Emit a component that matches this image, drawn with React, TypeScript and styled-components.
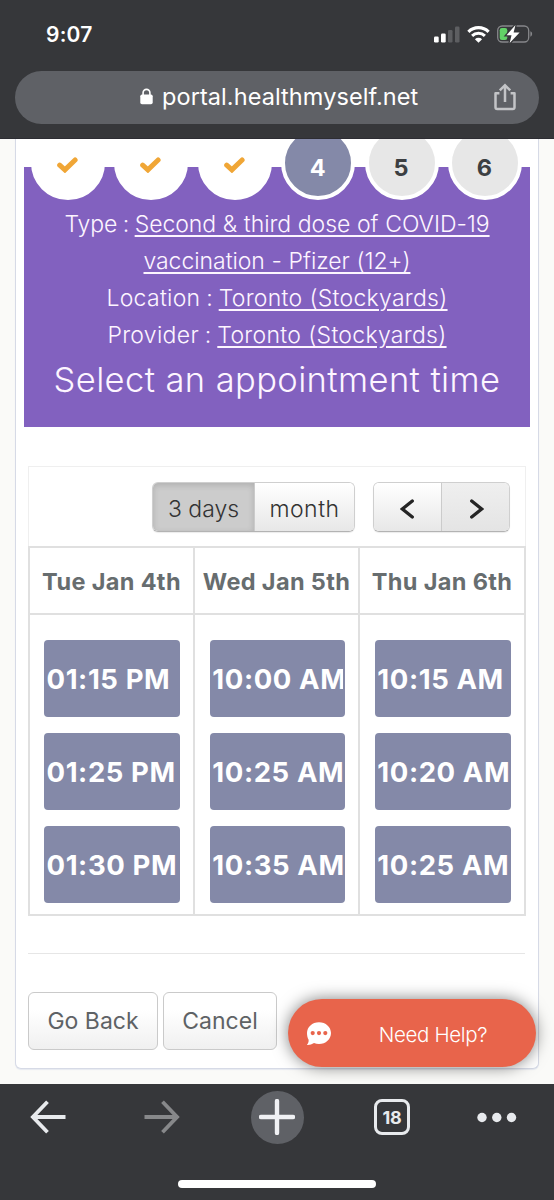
import React from "react";
import styled, { createGlobalStyle } from "styled-components";

const Global = createGlobalStyle`
  * { box-sizing: border-box; }
  body { margin: 0; background: #36373a; }
  button { margin: 0; padding: 0; border: 0; font: inherit; color: inherit; background: none; }
`;

const sans = `Inter, "Liberation Sans", sans-serif`;

const Phone = styled.div`
  width: 554px;
  height: 1200px;
  display: flex;
  flex-direction: column;
  font-family: ${sans};
  background: #36373a;
  overflow: hidden;
`;

const TopChrome = styled.header`
  flex: 0 0 139px;
  padding: 0 15px;
  border-bottom: 1px solid #2d2d33;
`;

const StatusBar = styled.div`
  height: 71px;
  padding: 0 6px 3px 31px;
  display: flex;
  align-items: center;
  justify-content: space-between;
`;

const Clock = styled.span`
  color: #fff;
  font-size: 21px;
  font-weight: 600;
  letter-spacing: 0.2px;
`;

const StatusIcons = styled.div`
  display: flex;
  align-items: center;
  gap: 7px;
`;

const AddressBar = styled.div`
  height: 53px;
  border-radius: 27px;
  background: #5f6166;
  color: #fff;
  display: grid;
  grid-template-columns: 125px 1fr 68px;
  align-items: center;
  padding-bottom: 2px;
`;

const Address = styled.div`
  grid-column: 2;
  display: flex;
  align-items: center;
  gap: 9px;
  font-size: 23.5px;
  letter-spacing: 0.08px;
  white-space: nowrap;
`;

const ShareButton = styled.button`
  justify-self: center;
  height: 28px;
`;

const Page = styled.main`
  flex: 1;
  min-height: 0;
  padding: 0 15px 15px;
  background: #fafaf8;
  overflow: hidden;
`;

const Card = styled.section`
  height: 943px;
  padding: 0 8px;
  border: 1px solid #d6dae6;
  border-top: 0;
  border-radius: 0 0 6px 6px;
  background: #fff;
  box-shadow: 0 1px 1px #e6e9f0;
`;

const Steps = styled.ol`
  list-style: none;
  margin: -13px 0 0;
  padding: 0 8px 0 7px;
  display: flex;
  justify-content: space-between;
  position: relative;
  z-index: 1;
`;

const tones = {
  done: { bg: "#fff", fg: "#f0a636", drop: 3 },
  current: { bg: "#8489a8", fg: "#fff", drop: 8 },
  next: { bg: "#e7e7e7", fg: "#3c3f42", drop: 8 },
};

const Step = styled.li<{ $tone: keyof typeof tones }>`
  width: 74px;
  height: 74px;
  padding-top: ${(p) => tones[p.$tone].drop}px;
  padding-right: 1px;
  border: 4.5px solid #fff;
  border-radius: 50%;
  display: flex;
  align-items: center;
  justify-content: center;
  font-size: 23.5px;
  font-weight: 700;
  background: ${(p) => tones[p.$tone].bg};
  color: ${(p) => tones[p.$tone].fg};
`;

const Banner = styled.div`
  height: 260px;
  margin-top: -33px;
  padding-top: 39px;
  background: #8261bf;
  color: #fdf5ff;
  text-align: center;
  white-space: nowrap;
  font-weight: 300;
`;

const Detail = styled.p<{ $spacing: number }>`
  margin: 0;
  font-size: 23px;
  line-height: 37px;
  letter-spacing: ${(p) => p.$spacing}px;
  word-spacing: -1px;
  u {
    word-spacing: 0.3px;
    text-decoration-thickness: 1.5px;
    text-underline-offset: 3px;
  }
`;

const Heading = styled.h1`
  margin: 5px 0 0;
  font-size: 34.5px;
  line-height: 42px;
  font-weight: 300;
  letter-spacing: 0.4px;
`;

const Calendar = styled.div`
  width: 498px;
  margin: 39px 0 0 4px;
  border: 1px solid #efefef;
  border-width: 1px 1px 0;
`;

const Toolbar = styled.div`
  height: 79px;
  padding: 15px 15px 0 0;
  display: flex;
  justify-content: flex-end;
  gap: 18px;
`;

const ButtonGroup = styled.div`
  height: 50px;
  display: flex;
  border: 1px solid #cfcfcf;
  border-bottom-color: #b3b3b3;
  border-radius: 6px;
  overflow: hidden;
  box-shadow: 0 1px 1px rgba(0, 0, 0, 0.08);
`;

const ToolButton = styled.button<{ $w: number; $state?: "pressed" | "hover" }>`
  width: ${(p) => p.$w}px;
  display: flex;
  align-items: center;
  justify-content: center;
  padding-top: 3px;
  font-size: 23px;
  font-weight: 300;
  letter-spacing: ${(p) => (p.$state === "pressed" ? 0 : 0.5)}px;
  color: #333;
  background: ${(p) =>
    p.$state === "pressed"
      ? "#cccccc"
      : p.$state === "hover"
        ? "linear-gradient(#efefef, #e4e4e4)"
        : "linear-gradient(#ffffff, #e7e7e7)"};
  box-shadow: ${(p) => (p.$state === "pressed" ? "inset 0 2px 6px rgba(0,0,0,.15)" : "none")};
  & + & { border-left: 1px solid #cbcbcb; }
`;

const Days = styled.div`
  margin: 0 -1px;
  width: 498px;
  display: grid;
  grid-template-columns: 165px 165px 166px;
  border: 2px solid #e0e0e0;
  border-right: 0;
`;

const Day = styled.div`
  min-width: 0;
  border-right: 2px solid #e0e0e0;
`;

const DayName = styled.h2`
  margin: 0;
  height: 67px;
  padding-top: 2px;
  border-bottom: 2px solid #e0e0e0;
  display: flex;
  align-items: center;
  justify-content: center;
  white-space: nowrap;
  font-size: 23.5px;
  font-weight: 700;
  letter-spacing: 0.35px;
  color: #676d6f;
`;

const Slots = styled.div`
  padding: 25px 13.5px 11px 14px;
  ${Day} + ${Day} & { padding-left: 14.8px; }
  display: flex;
  flex-direction: column;
  gap: 16px;
`;

const Slot = styled.button`
  height: 77px;
  padding: 0 2px 0 2.5px;
  border-radius: 4px;
  background: #8489a8;
  color: #fff;
  font-size: 27.5px;
  font-weight: 700;
  letter-spacing: 0.6px;
  text-align: left;
`;

const SlotText = styled.span`
  display: block;
  overflow: hidden;
  white-space: nowrap;
`;

const Actions = styled.footer`
  width: 497px;
  margin: 37px 0 0 4px;
  padding-top: 37.5px;
  border-top: 1px solid #e6e6e6;
  display: flex;
  gap: 5px;
`;

const ActionButton = styled.button<{ $w: number }>`
  width: ${(p) => p.$w}px;
  height: 58px;
  padding-top: 1px;
  border: 1.5px solid #cacaca;
  border-radius: 6px;
  background: linear-gradient(#fff 30%, #f0f0f0);
  color: #5e6265;
  font-size: 23px;
  font-weight: 370;
  letter-spacing: 0;
`;

const HelpButton = styled.button`
  position: absolute;
  left: 288px;
  top: 999px;
  width: 248px;
  height: 68px;
  border-radius: 34px;
  background: #e8644b;
  color: #fff;
  box-shadow: 0 0 16px rgba(0, 0, 0, 0.5);
  display: grid;
  grid-template-columns: 62px 1fr 20px;
  align-items: center;
  justify-items: center;
  font-family: ${sans};
  font-size: 20.5px;
  font-weight: 350;
  letter-spacing: -0.35px;
`;

const HelpLabel = styled.span`
  padding-top: 2px;
`;

const BottomChrome = styled.nav`
  flex: 0 0 116px;
  position: relative;
  z-index: 1;
  background: #36373a;
  display: flex;
  flex-direction: column;
  align-items: center;
`;

const NavRow = styled.div`
  width: 554px;
  height: 96px;
  padding: 0 20px 30px 0;
  display: grid;
  grid-template-columns: 95px 134px 96px 134px 75px;
  align-items: center;
  justify-items: center;
`;

const NewTab = styled.button`
  width: 53px;
  height: 53px;
  border-radius: 50%;
  background: #5f6166;
  display: grid;
  place-items: center;
`;

const TabCount = styled.button`
  width: 36px;
  height: 36px;
  border: 3.5px solid #e8eaed;
  border-radius: 8px;
  color: #e8eaed;
  font-size: 18px;
  font-weight: 700;
  letter-spacing: -0.2px;
  line-height: 29px;
`;

const HomeIndicator = styled.div`
  width: 198px;
  height: 8px;
  border-radius: 4px;
  background: #fff;
`;

const Check = () => (
  <svg width="21" height="16" viewBox="0 0 21 16">
    <path d="M2.7 8.2 7.9 12.9 18.1 3" fill="none" stroke="currentColor" strokeWidth="5" strokeLinecap="round" />
  </svg>
);

const Chevron = ({ flip }: { flip?: boolean }) => (
  <svg width="16" height="20" viewBox="0 0 16 20" transform={flip ? "scale(-1 1)" : undefined}>
    <path d="M12.300 2 2.300 10l10 8" fill="none" stroke="#252525" strokeWidth="3.3" strokeLinecap="round" />
  </svg>
);

const Signal = () => (
  <svg width="26" height="17" viewBox="0 0 26 17" fill="#fff">
    <rect x="0" y="10.5" width="4.7" height="6" rx="1.2" />
    <rect x="7" y="7.6" width="4.7" height="8.9" rx="1.2" />
    <rect x="14" y="4" width="4.5" height="12.5" rx="1.2" fill="#5d5e61" />
    <rect x="21" y="0.5" width="4.5" height="16" rx="1.2" fill="#5d5e61" />
  </svg>
);

const Wifi = () => (
  <svg width="23" height="17" viewBox="0 0 23 17" fill="none" stroke="#fff">
    <path d="M1.4 5.8a14.5 14.5 0 0 1 20.2 0" strokeWidth="3.2" />
    <path d="M5.1 9.9a9.2 9.2 0 0 1 12.8 0" strokeWidth="3" />
    <path d="M11.5 16.8 7.9 13.2a5.2 5.2 0 0 1 7.2 0Z" fill="#fff" stroke="none" />
  </svg>
);

const Battery = () => (
  <svg width="36" height="19" viewBox="0 0 36 19">
    <rect x="0.7" y="1" width="31" height="16" rx="4.5" fill="none" stroke="#86878a" strokeWidth="1.3" />
    <path d="M33.4 6.3c2.3.7 2.3 4.7 0 5.4Z" fill="#86878a" />
    <rect x="2.7" y="3" width="7.6" height="12" rx="2.2" fill="#62d267" />
    <path d="M18.5 0 9.5 10.3h5L12.7 18 22.6 7.6h-6Z" fill="#fff" stroke="#36373a" strokeWidth="2.6" paintOrder="stroke" />
  </svg>
);

const Lock = () => (
  <svg width="13" height="17" viewBox="0 0 13 17">
    <path d="M3.1 8V4.8a3.4 3.4 0 0 1 6.8 0V8" fill="none" stroke="#fff" strokeWidth="1.6" />
    <rect x="0.3" y="6.5" width="12.4" height="9.8" rx="1.7" fill="#fff" />
  </svg>
);

const Share = () => (
  <svg width="22" height="28" viewBox="0 0 22 28" fill="none" stroke="#c3c4c7" strokeWidth="2.5">
    <path d="M5.400 10.3H1.5v14q0 1.8 1.8 1.8h15.4q1.8 0 1.8-1.8v-14h-3.900" strokeLinejoin="round" />
    <path d="M11 19V2.4M5.800 7.400 11 2.200l5.200 5.200" />
  </svg>
);

const Arrow = ({ color, flip }: { color: string; flip?: boolean }) => (
  <svg width="36" height="34" viewBox="0 0 36 34" transform={flip ? "scale(-1 1)" : undefined}>
    <path d="M35.5 17H3M17.5 1.8 2.9 17l14.6 15.2" fill="none" stroke={color} strokeWidth="3.8" />
  </svg>
);

const Plus = () => (
  <svg width="36" height="36" viewBox="0 0 36 36">
    <path d="M18 2v32M2 18h32" stroke="#f0f1f4" strokeWidth="4.4" strokeLinecap="round" />
  </svg>
);

const Dots = () => (
  <svg width="40" height="11" viewBox="0 0 40 11" fill="#e8eaed">
    <circle cx="5" cy="5.5" r="4.7" />
    <circle cx="19.8" cy="5.5" r="4.7" />
    <circle cx="34.5" cy="5.5" r="4.7" />
  </svg>
);

const Bubble = () => (
  <svg width="26" height="25" viewBox="0 0 26 25">
    <path d="M13 1.2c6.8 0 12 4.8 12 10.9s-5.2 11-12 11c-1.8 0-3.4-.3-5-1C5.8 23.6 3.300 24.200.9 24c1.300-1.700 1.900-3.300 1.700-5.200C1.400 16.800 1 14.700 1 12.100 1 6 6.200 1.200 13 1.200Z" fill="#fff" />
    <g fill="#e8644b">
      <circle cx="6.7" cy="12.1" r="2.1" />
      <circle cx="13" cy="12.1" r="2.1" />
      <circle cx="19.3" cy="12.1" r="2.1" />
    </g>
  </svg>
);

const schedule = [
  { day: "Tue Jan 4th", slots: ["01:15 PM", "01:25 PM", "01:30 PM"] },
  { day: "Wed Jan 5th", slots: ["10:00 AM", "10:25 AM", "10:35 AM"] },
  { day: "Thu Jan 6th", slots: ["10:15 AM", "10:20 AM", "10:25 AM"] },
];

export default function App() {
  return (
    <Phone>
      <Global />
      <TopChrome>
        <StatusBar>
          <Clock>9:07</Clock>
          <StatusIcons>
            <Signal />
            <Wifi />
            <Battery />
          </StatusIcons>
        </StatusBar>
        <AddressBar>
          <Address>
            <Lock />
            <span>portal.healthmyself.net</span>
          </Address>
          <ShareButton aria-label="Share"><Share /></ShareButton>
        </AddressBar>
      </TopChrome>

      <Page>
        <Card>
          <Steps>
            <Step $tone="done"><Check /></Step>
            <Step $tone="done"><Check /></Step>
            <Step $tone="done"><Check /></Step>
            <Step $tone="current">4</Step>
            <Step $tone="next">5</Step>
            <Step $tone="next">6</Step>
          </Steps>
          <Banner>
            <Detail $spacing={-0.05}>
              Type : <u>Second &amp; third dose of COVID-19<br />vaccination - Pfizer (12+)</u>
            </Detail>
            <Detail $spacing={0.28}>Location : <u>Toronto (Stockyards)</u></Detail>
            <Detail $spacing={0.3}>Provider : <u>Toronto (Stockyards)</u></Detail>
            <Heading>Select an appointment time</Heading>
          </Banner>

          <Calendar>
            <Toolbar>
              <ButtonGroup>
                <ToolButton $w={101} $state="pressed">3 days</ToolButton>
                <ToolButton $w={100}>month</ToolButton>
              </ButtonGroup>
              <ButtonGroup>
                <ToolButton $w={67} aria-label="Previous"><Chevron /></ToolButton>
                <ToolButton $w={68} $state="hover" aria-label="Next"><Chevron flip /></ToolButton>
              </ButtonGroup>
            </Toolbar>
            <Days>
              {schedule.map(({ day, slots }) => (
                <Day key={day}>
                  <DayName>{day}</DayName>
                  <Slots>
                    {slots.map((time) => (
                      <Slot key={time}><SlotText>{time}</SlotText></Slot>
                    ))}
                  </Slots>
                </Day>
              ))}
            </Days>
          </Calendar>

          <Actions>
            <ActionButton $w={130}>Go Back</ActionButton>
            <ActionButton $w={114}>Cancel</ActionButton>
          </Actions>
        </Card>
        <HelpButton>
          <Bubble />
          <HelpLabel>Need Help?</HelpLabel>
        </HelpButton>
      </Page>

      <BottomChrome>
        <NavRow>
          <Arrow color="#e8eaed" />
          <Arrow color="#87888a" flip />
          <NewTab aria-label="New tab"><Plus /></NewTab>
          <TabCount>18</TabCount>
          <Dots />
        </NavRow>
        <HomeIndicator />
      </BottomChrome>
    </Phone>
  );
}
